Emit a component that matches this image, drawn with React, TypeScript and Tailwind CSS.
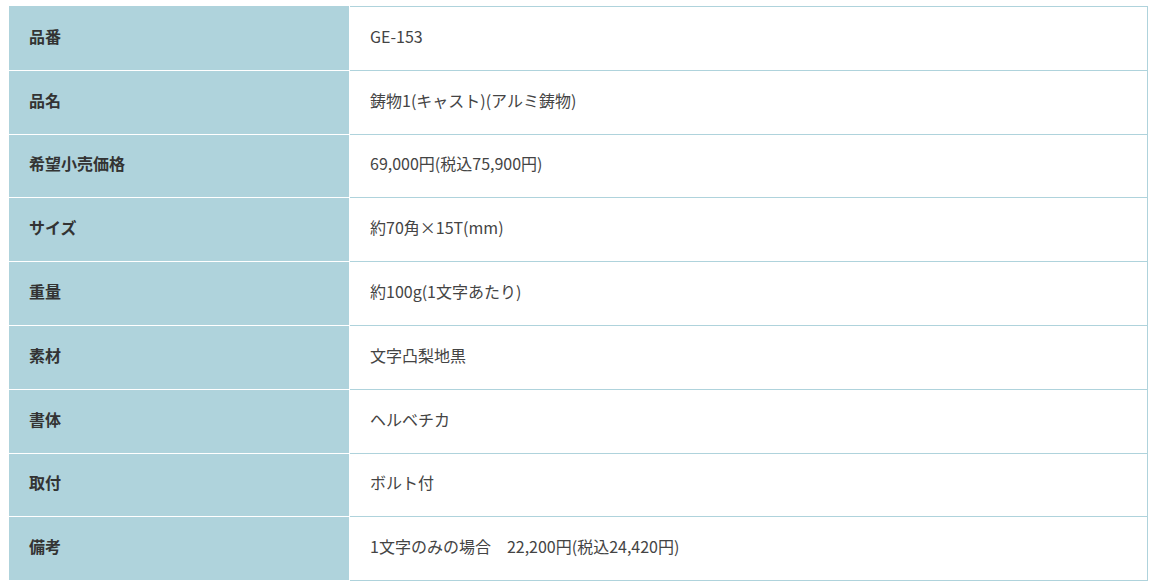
const ROWS: [string, string][] = [
  ["品番", "GE-153"],
  ["品名", "鋳物1(キャスト)(アルミ鋳物)"],
  ["希望小売価格", "69,000円(税込75,900円)"],
  ["サイズ", "約70角×15T(mm)"],
  ["重量", "約100g(1文字あたり)"],
  ["素材", "文字凸梨地黒"],
  ["書体", "ヘルベチカ"],
  ["取付", "ボルト付"],
  ["備考", "1文字のみの場合　22,200円(税込24,420円)"],
];

export default function App() {
  return (
    <div
      className="min-h-screen bg-white pl-[9px] pt-[6px]"
      style={{ fontFamily: '"Noto Sans CJK JP", "Noto Sans", sans-serif' }}
    >
      <table className="w-[1139px] table-fixed border-collapse border border-[#afd3dc]">
        <tbody>
          {ROWS.map(([label, value]) => (
            <tr key={label} className="h-[63.8px]">
              <th className="w-[340px] border-r border-b border-r-white border-b-white bg-[#afd3dc] pb-[5px] pl-[19px] text-left text-base font-bold text-[#333]">
                {label}
              </th>
              <td className="border-b border-[#afd3dc] pb-[5px] pl-5 text-base text-[#444]">
                {value}
              </td>
            </tr>
          ))}
        </tbody>
      </table>
    </div>
  );
}
